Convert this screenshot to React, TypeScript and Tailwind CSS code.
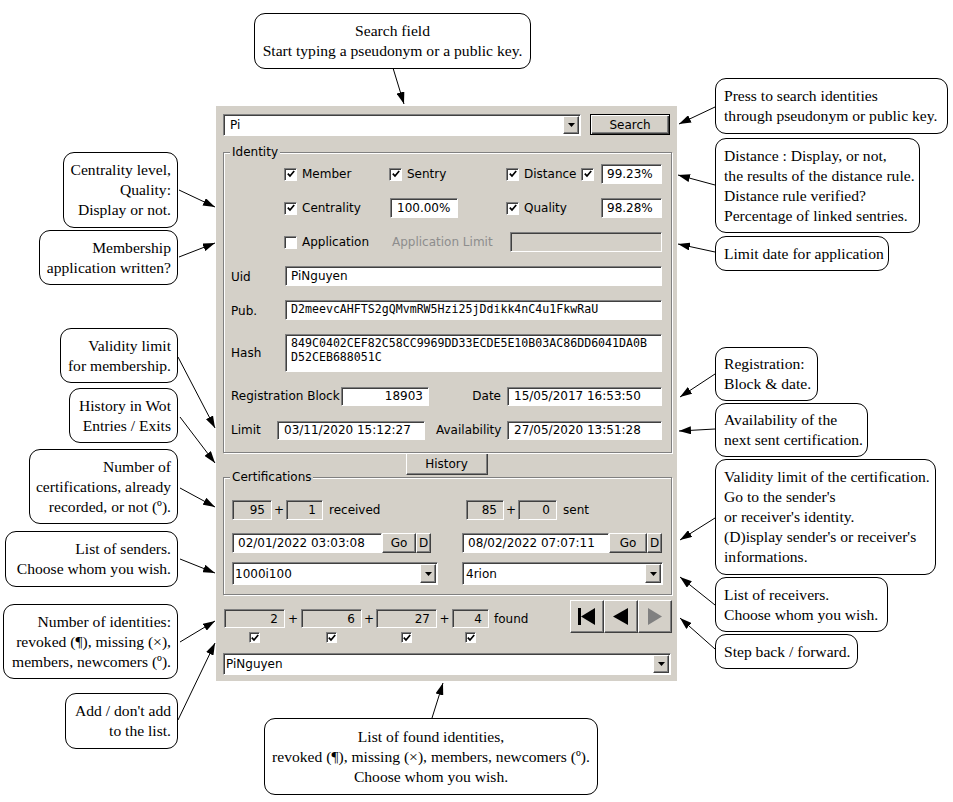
import React from 'react';

const sunken =
  'border border-[#808080] border-b-white border-r-white shadow-[inset_1px_1px_0_#404040]';
const raised =
  'border border-white border-b-[#404040] border-r-[#404040] shadow-[inset_-1px_-1px_0_#808080]';
const etched = 'border border-[#808080] shadow-[inset_1px_1px_0_#ffffff,1px_1px_0_#ffffff]';

type Callout = { pos: string; align: string; lines: string[] };

const callouts: Callout[] = [
  {
    pos: 'left-[254px] top-[13px] w-[277px] h-[56px]',
    align: 'text-center',
    lines: ['Search field', 'Start typing a pseudonym or a public key.'],
  },
  {
    pos: 'left-[715px] top-[78px] w-[233px] h-[56px]',
    align: 'text-left pl-[8px]',
    lines: ['Press to search identities', 'through pseudonym or public key.'],
  },
  {
    pos: 'left-[715px] top-[138px] w-[205px] h-[95px]',
    align: 'text-left pl-[8px]',
    lines: [
      'Distance : Display, or not,',
      'the results of the distance rule.',
      'Distance rule verified?',
      'Percentage of linked sentries.',
    ],
  },
  {
    pos: 'left-[715px] top-[236px] w-[174px] h-[35px]',
    align: 'text-left pl-[8px]',
    lines: ['Limit date for application'],
  },
  {
    pos: 'left-[63px] top-[152px] w-[115px] h-[76px]',
    align: 'text-right pr-[6px]',
    lines: ['Centrality level,', 'Quality:', 'Display or not.'],
  },
  {
    pos: 'left-[39px] top-[230px] w-[139px] h-[55px]',
    align: 'text-right pr-[6px]',
    lines: ['Membership', 'application written?'],
  },
  {
    pos: 'left-[60px] top-[328px] w-[118px] h-[55px]',
    align: 'text-right pr-[6px]',
    lines: ['Validity limit', 'for membership.'],
  },
  {
    pos: 'left-[69px] top-[388px] w-[109px] h-[55px]',
    align: 'text-right pr-[6px]',
    lines: ['History in Wot', 'Entries / Exits'],
  },
  {
    pos: 'left-[29px] top-[449px] w-[149px] h-[75px]',
    align: 'text-right pr-[6px]',
    lines: ['Number of', 'certifications, already', 'recorded, or not (º).'],
  },
  {
    pos: 'left-[5px] top-[531px] w-[173px] h-[56px]',
    align: 'text-right pr-[6px]',
    lines: ['List of senders.', 'Choose whom you wish.'],
  },
  {
    pos: 'left-[715px] top-[347px] w-[103px] h-[54px]',
    align: 'text-left pl-[8px]',
    lines: ['Registration:', 'Block & date.'],
  },
  {
    pos: 'left-[715px] top-[403px] w-[153px] h-[54px]',
    align: 'text-left pl-[8px]',
    lines: ['Availability of the', 'next sent certification.'],
  },
  {
    pos: 'left-[715px] top-[459px] w-[221px] h-[116px]',
    align: 'text-left pl-[8px]',
    lines: [
      'Validity limit of the certification.',
      "Go to the sender's",
      "or receiver's identity.",
      "(D)isplay sender's or receiver's",
      'informations.',
    ],
  },
  {
    pos: 'left-[715px] top-[577px] w-[173px] h-[55px]',
    align: 'text-left pl-[8px]',
    lines: ['List of receivers.', 'Choose whom you wish.'],
  },
  {
    pos: 'left-[715px] top-[634px] w-[143px] h-[35px]',
    align: 'text-left pl-[8px]',
    lines: ['Step back / forward.'],
  },
  {
    pos: 'left-[3px] top-[604px] w-[175px] h-[75px]',
    align: 'text-right pr-[6px]',
    lines: ['Number of identities:', 'revoked (¶), missing (×),', 'members, newcomers (º).'],
  },
  {
    pos: 'left-[65px] top-[693px] w-[113px] h-[56px]',
    align: 'text-right pr-[6px]',
    lines: ["Add / don't add", 'to the list.'],
  },
  {
    pos: 'left-[264px] top-[718px] w-[334px] h-[77px]',
    align: 'text-center',
    lines: [
      'List of found identities,',
      'revoked (¶), missing (×), members, newcomers (º).',
      'Choose whom you wish.',
    ],
  },
];

// [x1, y1, x2, y2], arrowhead at x2/y2
const arrows: number[][] = [
  [393, 68, 404, 104],
  [715, 107, 679, 124],
  [715, 185, 678, 175],
  [715, 252, 678, 244],
  [179, 190, 215, 207],
  [179, 257, 215, 243],
  [178, 357, 215, 428],
  [180, 417, 215, 463],
  [180, 488, 215, 507],
  [180, 559, 215, 573],
  [715, 374, 680, 397],
  [715, 429, 679, 431],
  [715, 518, 680, 540],
  [715, 605, 680, 577],
  [715, 649, 680, 618],
  [180, 642, 215, 621],
  [178, 720, 215, 643],
  [432, 718, 443, 683],
];

const Check = ({ on = true, small = false }: { on?: boolean; small?: boolean }) => (
  <span
    className={`inline-flex shrink-0 items-center justify-center bg-white ${sunken} ${
      small ? 'w-[11px] h-[11px]' : 'w-[13px] h-[13px]'
    }`}
  >
    {on && (
      <svg width="8" height="8" viewBox="0 0 8 8">
        <path d="M0.8 3.6 L3 6 L7.2 1" stroke="black" strokeWidth="1.7" fill="none" />
      </svg>
    )}
  </span>
);

const Field = ({ className, children }: { className: string; children?: React.ReactNode }) => (
  <div className={`flex items-center overflow-hidden whitespace-nowrap ${sunken} ${className}`}>
    {children}
  </div>
);

const DownArrow = () => (
  <svg width="7" height="4" viewBox="0 0 7 4">
    <polygon points="0,0 7,0 3.5,4" fill="black" />
  </svg>
);

const Combo = ({ value, className, pad }: { value: string; className: string; pad: string }) => (
  <div className={`flex bg-white ${sunken} ${className}`}>
    <span className={`flex-1 flex items-center ${pad}`}>{value}</span>
    <span className={`w-[16px] m-[1px] flex items-center justify-center bg-[#d4d0c8] ${raised}`}>
      <DownArrow />
    </span>
  </div>
);

const Btn = ({ className, children }: { className: string; children?: React.ReactNode }) => (
  <div className={`flex items-center justify-center bg-[#d4d0c8] ${raised} ${className}`}>{children}</div>
);

const Group = ({
  label,
  className,
  children,
}: {
  label: string;
  className: string;
  children: React.ReactNode;
}) => (
  <div className={`relative flex flex-col ${etched} ${className}`}>
    <span className="absolute left-[6px] -top-[8px] px-[2px] leading-[14px] bg-[#d4d0c8]">{label}</span>
    {children}
  </div>
);

const Labeled = ({ w, on = true, label }: { w: string; on?: boolean; label: string }) => (
  <div className={`flex items-center ${w}`}>
    <Check on={on} />
    <span className="ml-[5px]">{label}</span>
  </div>
);

const Panel = () => (
  <div className="absolute left-[216px] top-[106px] w-[461px] h-[575px] bg-[#d4d0c8] px-[7px] flex flex-col font-['DejaVu_Sans',sans-serif] text-[12px] text-black">
    {/* Search */}
    <div className="mt-[8px] flex h-[22px]">
      <Combo value="Pi" className="w-[358px] h-[22px]" pad="pl-[6px]" />
      <div className="ml-[9px] w-[80px] h-[21px] flex items-center justify-center border border-black bg-[#d4d0c8] shadow-[inset_1px_1px_0_#ffffff,inset_-1px_-1px_0_#404040,inset_-2px_-2px_0_#808080]">
        Search
      </div>
    </div>

    {/* Identity */}
    <Group label="Identity" className="mt-[16px] w-[449px] h-[301px] pt-[11px] gap-[14px]">
      <div className="flex items-center h-[20px] pl-[60px]">
        <Labeled w="w-[105px]" label="Member" />
        <Labeled w="w-[117px]" label="Sentry" />
        <Labeled w="w-[75px]" label="Distance" />
        <Check />
        <Field className="ml-[7px] w-[61px] h-[20px] bg-white pl-[5px]">99.23%</Field>
      </div>
      <div className="flex items-center h-[20px] pl-[60px]">
        <Labeled w="w-[106px]" label="Centrality" />
        <Field className="w-[68px] h-[20px] bg-white pl-[6px]">100.00%</Field>
        <span className="w-[48px]" />
        <Labeled w="w-[95px]" label="Quality" />
        <Field className="w-[61px] h-[20px] bg-white pl-[5px]">98.28%</Field>
      </div>
      <div className="flex items-center h-[20px] pl-[60px]">
        <Labeled w="w-[108px]" on={false} label="Application" />
        <span className="w-[118px] text-[#8d8d8d]">Application Limit</span>
        <Field className="w-[152px] h-[20px] bg-[#d4d0c8]" />
      </div>
      <div className="flex items-center h-[20px] pl-[7px]">
        <span className="w-[54px] pt-[2px]">Uid</span>
        <Field className="w-[377px] h-[20px] bg-white pl-[5px]">PiNguyen</Field>
      </div>
      <div className="flex items-center h-[20px] pl-[7px]">
        <span className="w-[54px] pt-[2px]">Pub.</span>
        <Field className="w-[377px] h-[20px] bg-white pl-[5px] font-['DejaVu_Sans_Mono',monospace] text-[11.6px]">
          D2meevcAHFTS2gQMvmRW5Hzi25jDdikk4nC4u1FkwRaU
        </Field>
      </div>
      <div className="flex items-center h-[38px] pl-[7px]">
        <span className="w-[54px]">Hash</span>
        <div
          className={`w-[377px] h-[38px] bg-white pl-[5px] pt-[1px] leading-[14px] font-['DejaVu_Sans_Mono',monospace] text-[11.6px] ${sunken}`}
        >
          <div>849C0402CEF82C58CC9969DD33ECDE5E10B03AC86DD6041DA0B</div>
          <div>D52CEB688051C</div>
        </div>
      </div>
      <div className="flex items-center h-[20px] pl-[7px]">
        <span className="w-[110px] whitespace-nowrap">Registration Block</span>
        <Field className="w-[88px] h-[19px] bg-white justify-end pr-[5px]">18903</Field>
        <span className="w-[78px] text-right pr-[6px]">Date</span>
        <Field className="w-[155px] h-[19px] bg-white pl-[6px]">15/05/2017 16:53:50</Field>
      </div>
      <div className="flex items-center h-[20px] pl-[7px]">
        <span className="w-[46px]">Limit</span>
        <Field className="w-[148px] h-[19px] bg-white pl-[6px]">03/11/2020 15:12:27</Field>
        <span className="w-[82px] pl-[11px]">Availability</span>
        <Field className="w-[155px] h-[19px] bg-white pl-[6px]">27/05/2020 13:51:28</Field>
      </div>
    </Group>

    <Btn className="self-center w-[82px] h-[22px]">History</Btn>

    {/* Certifications */}
    <Group label="Certifications" className="mt-[2px] w-[449px] h-[118px] pt-[22px]">
      <div className="flex items-center h-[20px] pl-[8px]">
        <div className="w-[230px] flex items-center">
          <Field className="w-[40px] h-[20px] justify-end pr-[6px]">95</Field>
          <span className="w-[14px] text-center">+</span>
          <Field className="w-[37px] h-[20px] justify-end pr-[6px]">1</Field>
          <span className="ml-[6px]">received</span>
        </div>
        <div className="flex items-center pl-[4px]">
          <Field className="w-[38px] h-[20px] justify-end pr-[6px]">85</Field>
          <span className="w-[14px] text-center">+</span>
          <Field className="w-[39px] h-[20px] justify-end pr-[6px]">0</Field>
          <span className="ml-[6px]">sent</span>
        </div>
      </div>
      <div className="mt-[13px] flex items-center h-[20px] pl-[8px]">
        <div className="w-[230px] flex items-center">
          <Field className="w-[150px] h-[20px] bg-white pl-[5px]">02/01/2022 03:03:08</Field>
          <Btn className="w-[34px] h-[20px]">Go</Btn>
          <Btn className="w-[15px] h-[20px]">D</Btn>
        </div>
        <Field className="w-[147px] h-[20px] bg-white pl-[5px]">08/02/2022 07:07:11</Field>
        <Btn className="w-[38px] h-[20px]">Go</Btn>
        <Btn className="w-[15px] h-[20px]">D</Btn>
      </div>
      <div className="mt-[9px] flex items-center h-[23px] pl-[8px]">
        <div className="w-[230px]">
          <Combo value="1000i100" className="w-[206px] h-[23px]" pad="pl-[2px]" />
        </div>
        <Combo value="4rion" className="w-[201px] h-[23px]" pad="pl-[3px]" />
      </div>
    </Group>

    {/* Found */}
    <div className="mt-[5px] flex items-start">
      <div className="pl-[1px] mt-[9px] flex flex-col">
        <div className="flex items-center h-[19px]">
          <Field className="w-[61px] h-[19px] justify-end pr-[6px]">2</Field>
          <span className="w-[16px] text-center">+</span>
          <Field className="w-[61px] h-[19px] justify-end pr-[6px]">6</Field>
          <span className="w-[14px] text-center">+</span>
          <Field className="w-[61px] h-[19px] justify-end pr-[6px]">27</Field>
          <span className="w-[15px] text-center">+</span>
          <Field className="w-[37px] h-[19px] justify-end pr-[6px]">4</Field>
          <span className="ml-[5px]">found</span>
        </div>
        <div className="mt-[4px] flex h-[11px]">
          <span className="w-[61px] flex justify-center">
            <Check small />
          </span>
          <span className="w-[16px]" />
          <span className="w-[61px] flex justify-center">
            <Check small />
          </span>
          <span className="w-[14px]" />
          <span className="w-[61px] flex justify-center">
            <Check small />
          </span>
          <span className="w-[15px]" />
          <span className="w-[37px] flex justify-center">
            <Check small />
          </span>
        </div>
      </div>
      <div className="ml-auto -mr-[2px] flex">
        <Btn className="w-[34px] h-[33px]">
          <svg width="18" height="17" viewBox="0 0 18 17">
            <rect x="0" y="0" width="3" height="17" fill="black" />
            <polygon points="3,8.5 17,0 17,17" fill="black" />
          </svg>
        </Btn>
        <Btn className="w-[34px] h-[33px]">
          <svg width="16" height="17" viewBox="0 0 16 17">
            <polygon points="0,8.5 15,0 15,17" fill="black" />
          </svg>
        </Btn>
        <Btn className="w-[34px] h-[33px]">
          <svg width="16" height="17" viewBox="0 0 16 17">
            <polygon points="15,8.5 1,0 1,17" fill="#808080" />
          </svg>
        </Btn>
      </div>
    </div>

    <Combo value="PiNguyen" className="mt-[10px] w-[448px] h-[22px]" pad="pl-[2px]" />
  </div>
);

export default function App() {
  return (
    <div className="relative w-[953px] h-[802px] overflow-hidden bg-white font-['Liberation_Serif',serif] text-black">
      <Panel />

      {callouts.map((c, i) => (
        <div
          key={i}
          className={`absolute flex flex-col justify-center whitespace-nowrap rounded-[11px] border border-black bg-white text-[15.6px] leading-5 ${c.pos} ${c.align}`}
        >
          {c.lines.map((l, j) => (
            <div key={j}>{l}</div>
          ))}
        </div>
      ))}

      <svg className="absolute inset-0 pointer-events-none" width="953" height="802">
        <defs>
          <marker
            id="head"
            markerWidth="12"
            markerHeight="8"
            refX="12"
            refY="4"
            orient="auto"
            markerUnits="userSpaceOnUse"
          >
            <path d="M0 0 L12 4 L0 8 z" fill="black" />
          </marker>
        </defs>
        {arrows.map(([x1, y1, x2, y2], i) => (
          <line key={i} x1={x1} y1={y1} x2={x2} y2={y2} stroke="black" strokeWidth="1" markerEnd="url(#head)" />
        ))}
      </svg>
    </div>
  );
}
